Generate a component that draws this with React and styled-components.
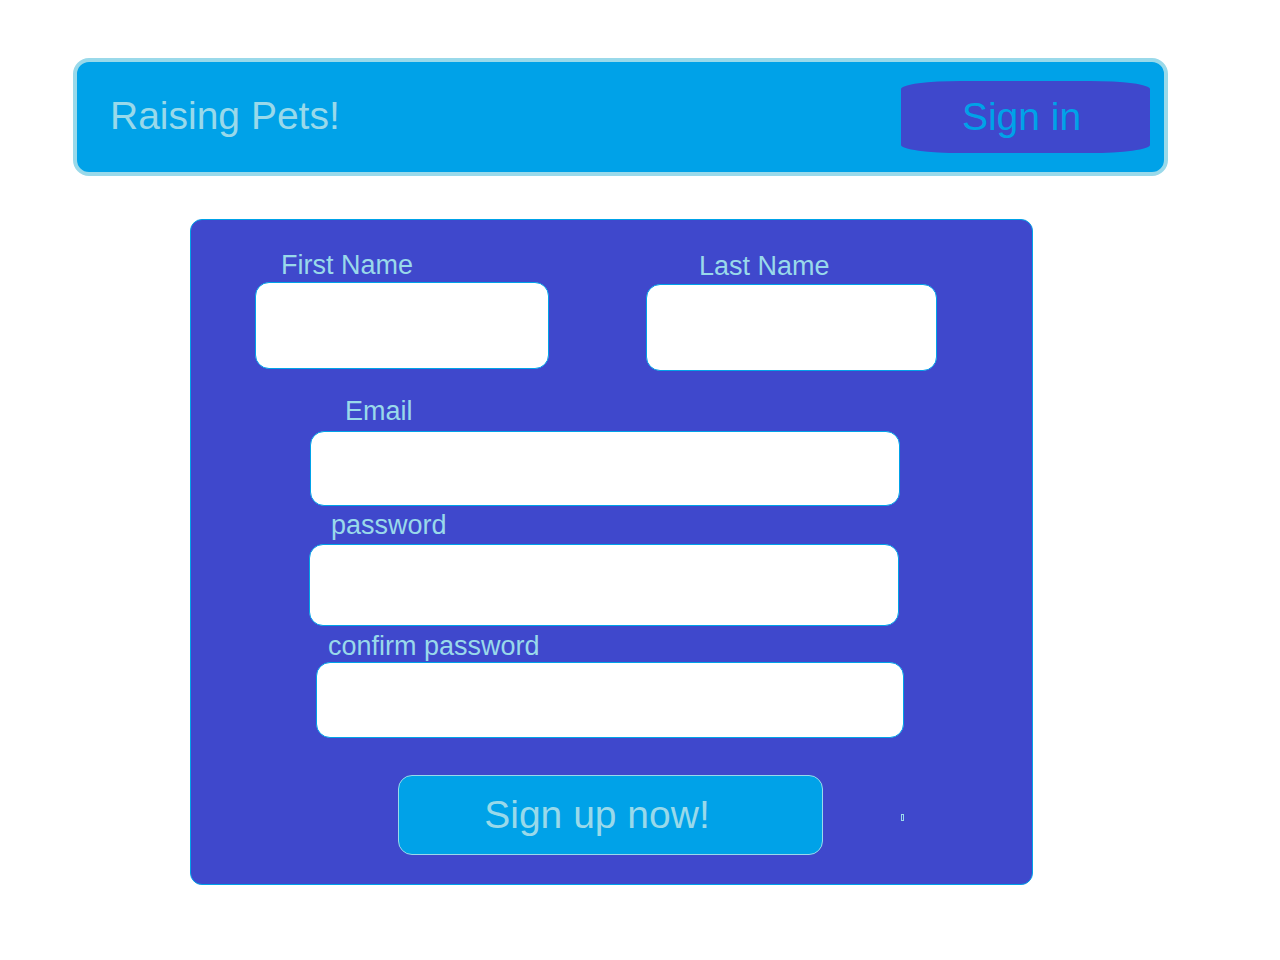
import styled, { createGlobalStyle } from "styled-components";

const GlobalStyle = createGlobalStyle`
  body {
    margin: 0;
    background: white;
    font-family: "Liberation Sans", Arial, sans-serif;
  }
`;

const Page = styled.div`
  display: flex;
  flex-direction: column;
  padding: 58px 0 0 73px;
`;

const Header = styled.div`
  display: flex;
  flex-direction: row;
  justify-content: space-between;
  align-items: center;
  box-sizing: border-box;
  width: 1095px;
  height: 118px;
  padding: 0 14px 0 33px;
  background-color: #00a2e8;
  border: 4px solid #99d9ea;
  border-radius: 16px;
`;

const AppName = styled.div`
  color: #99d9ea;
  font-size: 39px;
  margin-bottom: 2px;
`;

const SignInButton = styled.button`
  width: 249px;
  height: 72px;
  padding: 0 8px 0 0;
  border: none;
  border-radius: 60px / 8px;
  background-color: #3f48cc;
  color: #00a2e8;
  font-family: inherit;
  font-size: 39px;
`;

const FormCard = styled.div`
  display: flex;
  flex-direction: column;
  box-sizing: border-box;
  width: 843px;
  height: 666px;
  margin: 43px 0 0 117px;
  padding-top: 30px;
  background-color: #3f48cc;
  border: 1px solid #00a2e8;
  border-radius: 12px;
`;

const Row = styled.div`
  display: flex;
  flex-direction: row;
  align-items: flex-start;
  margin-top: ${(p) => p.top || 0}px;
`;

const Field = styled.div`
  display: flex;
  flex-direction: column;
  width: ${(p) => p.width}px;
  margin-left: ${(p) => p.left}px;
  margin-top: ${(p) => p.top || 0}px;
`;

const Label = styled.label`
  display: block;
  color: #99d9ea;
  font-size: 27px;
  line-height: 31px;
  padding-left: ${(p) => p.indent}px;
  margin-bottom: ${(p) => p.gap || 0}px;
`;

const TextInput = styled.input`
  display: block;
  box-sizing: border-box;
  width: 100%;
  height: ${(p) => p.height}px;
  background: white;
  border: 1px solid #00a2e8;
  border-radius: 14px;
  outline: none;
`;

const SignUpButton = styled.button`
  box-sizing: border-box;
  width: 425px;
  height: 80px;
  margin-left: 207px;
  padding: 0 27px 0 0;
  background-color: #00a2e8;
  border: 1px solid #99d9ea;
  border-radius: 14px;
  color: #99d9ea;
  font-family: inherit;
  font-size: 39px;
`;

const Dot = styled.span`
  display: block;
  width: 1px;
  height: 5px;
  margin: 39px 0 0 78px;
  border: 1px solid #99d9ea;
`;

function FormField({ label, left, width, height, indent, top, gap }) {
  return (
    <Field left={left} width={width} top={top}>
      <Label indent={indent} gap={gap}>
        {label}
      </Label>
      <TextInput height={height} />
    </Field>
  );
}

function App() {
  return (
    <Page>
      <GlobalStyle />
      <Header>
        <AppName>Raising Pets!</AppName>
        <SignInButton>Sign in</SignInButton>
      </Header>
      <FormCard>
        <Row>
          <FormField label="First Name" left={64} width={294} height={87} indent={26} gap={1} />
          <FormField label="Last Name" left={97} width={291} height={87} indent={53} gap={2} top={1} />
        </Row>
        <FormField label="Email" left={119} width={590} height={75} indent={35} top={25} gap={4} />
        <FormField label="password" left={118} width={590} height={82} indent={22} top={4} gap={3} />
        <FormField label="confirm password" left={125} width={588} height={76} indent={12} top={5} />
        <Row top={37}>
          <SignUpButton>Sign up now!</SignUpButton>
          <Dot />
        </Row>
      </FormCard>
    </Page>
  );
}

export default App;
